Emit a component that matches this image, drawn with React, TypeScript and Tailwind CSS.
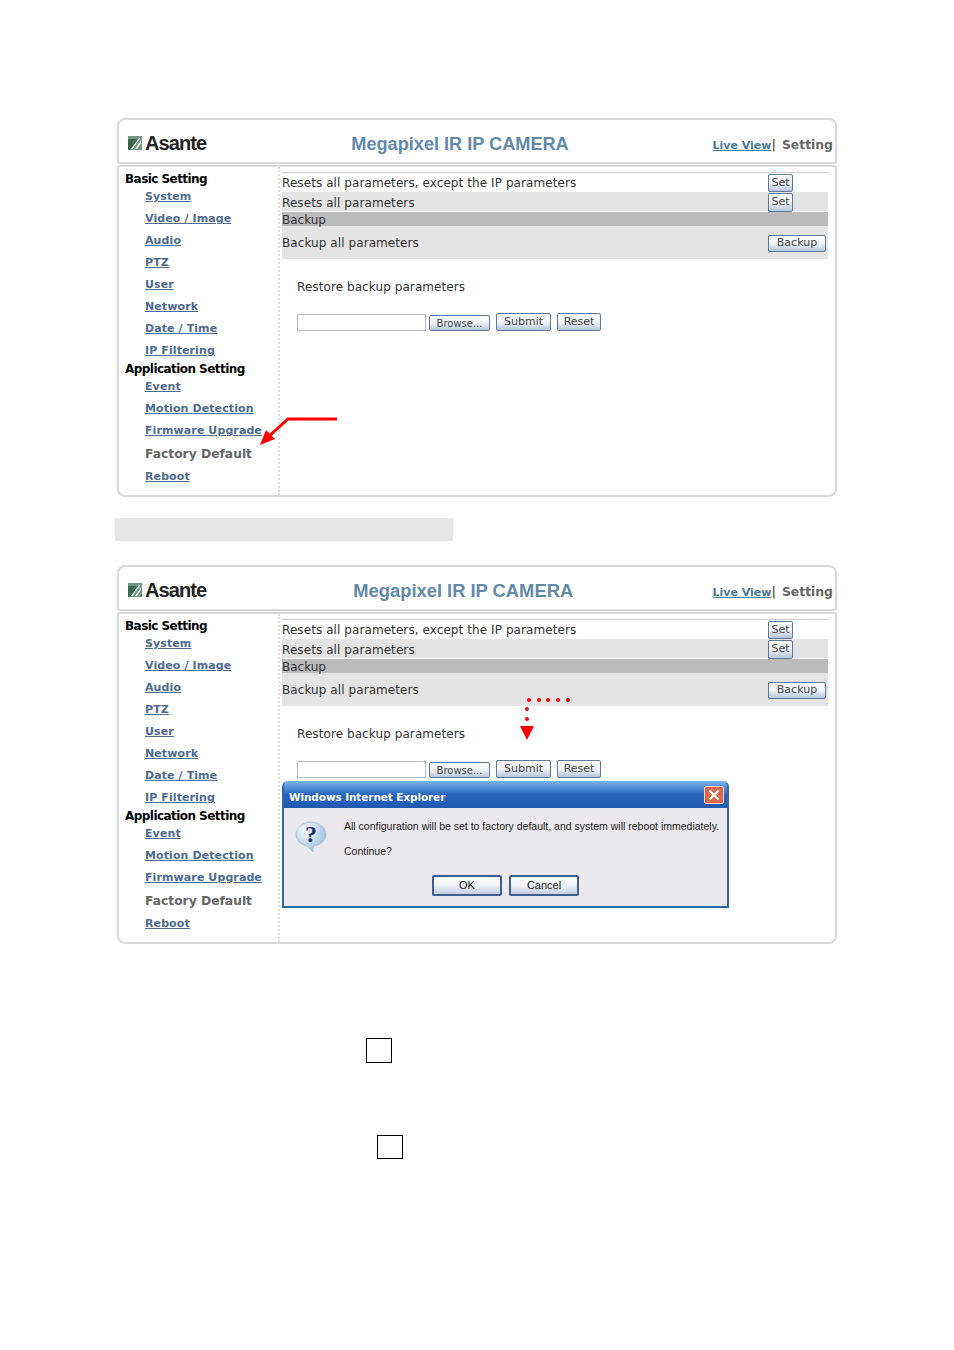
import React from "react";

const dejavu = "font-['DejaVu_Sans',sans-serif]";
const links1 = ["System", "Video / Image", "Audio", "PTZ", "User", "Network", "Date / Time", "IP Filtering"];
const links2 = ["Event", "Motion Detection", "Firmware Upgrade"];

function NavLink({ label }: { label: string }) {
  return (
    <a className="block h-[22px] pl-[20px] font-['DejaVu_Sans',sans-serif] text-[11px] leading-[16px] font-bold tracking-[0.1px] text-[#4d6a91] underline">
      {label}
    </a>
  );
}

function Btn({ label, className }: { label: string; className: string }) {
  return (
    <button className={`flex items-center justify-center rounded-[2px] border border-[#5d7a9c] bg-gradient-to-b from-white via-[#f0f3f8] to-[#b7c6de] font-['DejaVu_Sans',sans-serif] text-[11px] text-[#444] ${className}`}>
      {label}
    </button>
  );
}

function Logo() {
  return (
    <div className="flex items-center gap-[3px]">
      <svg width="14" height="14" viewBox="0 0 14 14">
        <rect width="14" height="14" fill="#6f9682" />
        <path d="M0 3h10L2 14H0z" fill="#3d6651" />
        <path d="M3 13 11 2h1.5L4.5 13zM7 13l6-8.500V7l-4 6z" fill="#fff" />
      </svg>
      <span className="font-['Liberation_Sans',sans-serif] text-[20px] leading-none font-bold tracking-[-0.9px] text-[#222]">Asante</span>
    </div>
  );
}

function Panel({ titleClass, children }: { titleClass: string; children?: React.ReactNode }) {
  return (
    <section className="relative w-[720px]">
      <header className="flex h-[46px] items-center rounded-t-[8px] rounded-b-[3px] border-2 border-[#d8d8d8] bg-white pt-[4px] pl-[9px]">
        <Logo />
        <h1 className={`mt-[3px] font-['Liberation_Sans',sans-serif] font-bold whitespace-nowrap text-[#6189ac] ${titleClass}`}>Megapixel IR IP CAMERA</h1>
        <div className="mt-[4px] ml-auto flex items-baseline pr-[2px] whitespace-nowrap">
          <a className={`${dejavu} text-[11px] font-bold text-[#4b7799] underline`}>Live View</a>
          <span className={`${dejavu} mr-[6px] text-[12px] font-bold text-[#555]`}>|</span>
          <span className={`${dejavu} text-[12.400px] font-bold text-[#666]`}>Setting</span>
        </div>
      </header>
      <div className="mt-px flex h-[332px] rounded-t-[3px] rounded-b-[8px] border-2 border-[#d8d8d8] bg-white">
        <nav className="w-[161px] shrink-0 border-r-2 border-dotted border-[#dedede] pt-[4px] pl-[6px]">
          <h2 className={`${dejavu} h-[18px] text-[12px] leading-[17px] font-bold tracking-[-0.55px] text-black`}>Basic Setting</h2>
          {links1.slice(0, 7).map((l) => (
            <NavLink key={l} label={l} />
          ))}
          <a className={`${dejavu} block h-[17px] pl-[20px] text-[11px] leading-[16px] font-bold tracking-[0.1px] text-[#4d6a91] underline`}>IP Filtering</a>
          <h2 className={`${dejavu} mt-[1px] h-[18px] text-[12px] leading-[17px] font-bold tracking-[-0.55px] text-black`}>Application Setting</h2>
          {links2.map((l) => (
            <NavLink key={l} label={l} />
          ))}
          <div className={`${dejavu} h-[24px] pl-[20px] text-[12.300px] leading-[18px] font-bold text-[#666]`}>Factory Default</div>
          <NavLink label="Reboot" />
        </nav>
        <main className={`${dejavu} w-[548px] shrink-0 pt-[5px] pl-[2px] text-[12px] text-[#333]`}>
          <div className="relative h-[20px] border-t border-[#ccc]">
            <span className="absolute top-[2px] left-0 leading-[16px] tracking-[0.08px] whitespace-nowrap">Resets all parameters, except the IP parameters</span>
            <Btn label="Set" className="absolute top-[1px] left-[486px] h-[18px] w-[25px]" />
          </div>
          <div className="relative h-[19px] bg-[#e4e4e4]">
            <span className="absolute top-[3px] left-0 leading-[16px] tracking-[0.08px] whitespace-nowrap">Resets all parameters</span>
            <Btn label="Set" className="absolute top-[1px] left-[486px] h-[19px] w-[25px]" />
          </div>
          <div className="mt-px h-[14px] bg-[#bbbbbb] leading-[16px]">Backup</div>
          <div className="flex h-[33px] items-center justify-between bg-[#e4e4e4] pr-[2px]">
            <span className="tracking-[0.08px]">Backup all parameters</span>
            <Btn label="Backup" className="mt-[1px] h-[17px] w-[58px]" />
          </div>
          <p className="mt-[20px] ml-[15px] leading-[16px] tracking-[0.08px]">Restore backup parameters</p>
          <div className="mt-[18px] ml-[15px] flex items-start">
            <div className="mt-[1px] h-[17px] w-[129px] border border-[#bbb] bg-white" />
            <Btn label="Browse..." className="mt-[2px] ml-[3px] h-[16px] w-[61px] !text-[10px]" />
            <Btn label="Submit" className="ml-[6px] h-[18px] w-[55px]" />
            <Btn label="Reset" className="ml-[6px] h-[18px] w-[44px]" />
          </div>
        </main>
      </div>
      {children}
    </section>
  );
}

function RedArrow() {
  return (
    <svg className="absolute top-[295px] left-[140px]" width="85" height="36" viewBox="0 0 85 36">
      <path d="M80 6H31L11 24" fill="none" stroke="#f00" strokeWidth="3" />
      <path d="M3 32 9 17 18 26z" fill="#f00" />
    </svg>
  );
}

function DottedArrow() {
  return (
    <svg className="absolute top-[130px] left-[400px]" width="60" height="48" viewBox="0 0 60 48">
      <g fill="#f00">
        <circle cx="12" cy="5" r="2" />
        <circle cx="22" cy="5" r="2" />
        <circle cx="31" cy="5" r="2" />
        <circle cx="41" cy="5" r="2" />
        <circle cx="51" cy="5" r="2" />
        <circle cx="10" cy="14" r="2" />
        <circle cx="10" cy="24" r="2" />
        <path d="M3 31h14l-7 14z" />
      </g>
    </svg>
  );
}

function QuestionIcon() {
  return (
    <svg width="32" height="32" viewBox="0 0 32 32" className="shrink-0">
      <defs>
        <radialGradient id="q" cx="35%" cy="30%" r="80%">
          <stop offset="0%" stopColor="#ffffff" />
          <stop offset="100%" stopColor="#8eb4d8" />
        </radialGradient>
      </defs>
      <path d="M16 1C8 1 1 6.500 1 13.500c0 6 5 10.500 11 11.500l6 6 .5-6C25 24.500 31 20 31 13.500 31 6.500 24 1 16 1z" fill="url(#q)" stroke="#a9bfd4" strokeWidth="0.800" />
      <text x="16" y="21" textAnchor="middle" fontFamily="Liberation Serif, serif" fontWeight="700" fontSize="24" fill="#1b2c74">?</text>
    </svg>
  );
}

function DialogBtn({ label }: { label: string }) {
  return (
    <button className="h-[21px] w-[70px] rounded-[2px] border-2 border-[#3f5f8f] bg-gradient-to-b from-white via-[#eef0f4] to-[#c4cfe4] font-['Liberation_Sans',sans-serif] text-[11px] text-[#222]">
      {label}
    </button>
  );
}

function Dialog() {
  return (
    <div className="absolute top-[216px] left-[165px] w-[447px] overflow-hidden rounded-t-[6px] border-2 border-t-0 border-[#2f68a8] bg-[#ece9ee]">
      <div className="flex h-[27px] items-center justify-between bg-gradient-to-b from-[#78b4ec] via-[#2a66be] to-[#2059ad] pr-[3px] pl-[5px]">
        <span className={`${dejavu} pt-[7px] text-[10.500px] font-bold tracking-[-0.1px] text-white`}>Windows Internet Explorer</span>
        <span className="flex h-[18px] w-[20px] items-center justify-center rounded-[2px] border border-[#f1d5cc] bg-[#d8684c]">
          <svg width="12" height="12" viewBox="0 0 12 12">
            <path d="M1.500 1.500l9 9M10.500 1.500l-9 9" stroke="#fff" strokeWidth="2.200" />
          </svg>
        </span>
      </div>
      <div className="flex h-[98px] pt-[5px] pl-[11px]">
        <div className="pt-[8px]">
          <QuestionIcon />
        </div>
        <div className="pt-[7px] pl-[17px] font-['Liberation_Sans',sans-serif] text-[10.500px] leading-[13px] whitespace-nowrap text-[#222]">
          <p>All configuration will be set to factory default, and system will reboot immediately.</p>
          <p className="mt-[12px]">Continue?</p>
        </div>
      </div>
      <div className="absolute top-[94px] left-[148px] flex gap-[7px]">
        <DialogBtn label="OK" />
        <DialogBtn label="Cancel" />
      </div>
    </div>
  );
}

export default function App() {
  return (
    <div className="relative h-[1350px] w-[954px] overflow-hidden bg-white pt-[118px] pl-[117px]">
      <Panel titleClass="ml-[145px] text-[18.150px] leading-none">
        <RedArrow />
      </Panel>
      <div className="mt-[21px] -ml-[2px] h-[23px] w-[338px] bg-[#e5e5e5]" />
      <div className="mt-[24px]">
        <Panel titleClass="ml-[147px] text-[18.350px] leading-none">
          <DottedArrow />
          <Dialog />
        </Panel>
      </div>
      <div className="mt-[94px] ml-[249px] h-[25px] w-[26px] border border-black" />
      <div className="mt-[72px] ml-[260px] h-[24px] w-[26px] border border-black" />
    </div>
  );
}
